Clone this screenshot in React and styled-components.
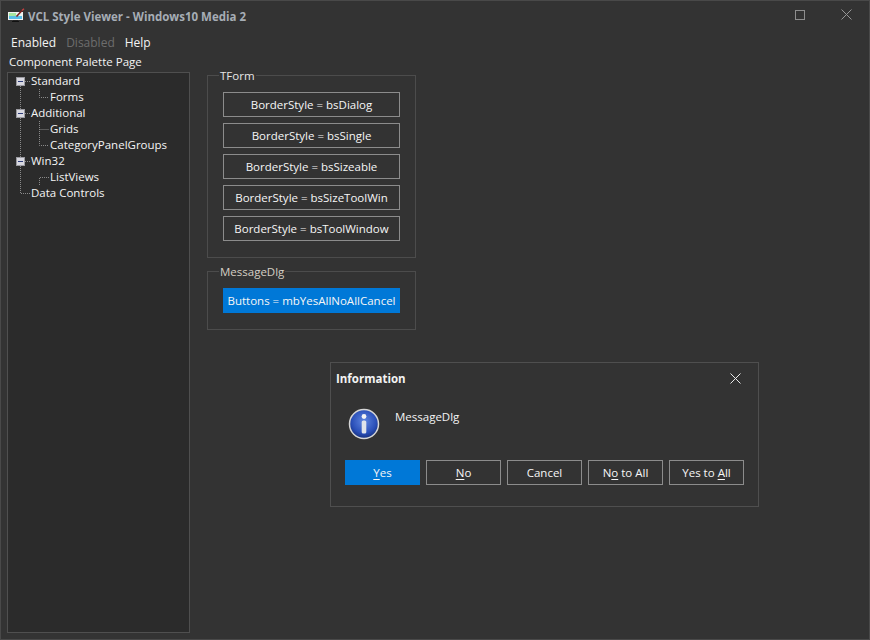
import React from 'react';
import styled, { createGlobalStyle } from 'styled-components';

const GlobalStyle = createGlobalStyle`
  html, body {
    margin: 0;
    padding: 0;
    background: #333333;
  }
  * {
    box-sizing: border-box;
  }
`;

const Window = styled.div`
  position: relative;
  width: 870px;
  height: 640px;
  display: flex;
  flex-direction: column;
  background: #333333;
  border: 1px solid #494949;
  color: #f4f4f4;
  font-family: "Open Sans", "Noto Sans", "Liberation Sans", sans-serif;
  font-size: 11.5px;
  overflow: hidden;
`;

const TitleBar = styled.div`
  height: 30px;
  display: flex;
  align-items: center;
  padding-left: 6px;
  flex-shrink: 0;
`;

const TitleText = styled.div`
  margin-left: 3px;
  font-weight: 700;
  font-size: 11.5px;
  color: #a6adb5;
  white-space: nowrap;
`;

const WindowButtons = styled.div`
  margin-left: auto;
  display: flex;
  margin-top: -3px;
`;

const WindowButton = styled.div`
  width: 46px;
  height: 22px;
  display: flex;
  align-items: center;
  justify-content: center;
`;

const MenuBar = styled.div`
  height: 22px;
  display: flex;
  padding-left: 10px;
  gap: 10px;
  align-items: center;
  flex-shrink: 0;
`;

const MenuItem = styled.span`
  font-size: 12px;
  color: ${p => (p.$disabled ? '#6d6d6d' : '#f4f4f4')};
`;

const Body = styled.div`
  flex: 1;
  display: flex;
  min-height: 0;
`;

const LeftColumn = styled.div`
  width: 190px;
  padding-left: 6px;
  display: flex;
  flex-direction: column;
  flex-shrink: 0;
`;

const PageLabel = styled.div`
  margin-left: 2px;
  height: 19px;
  line-height: 18px;
  white-space: nowrap;
`;

const Tree = styled.div`
  position: relative;
  width: 183px;
  height: 561px;
  background: #2b2b2b;
  border: 1px solid #4f4f4f;
  padding-top: 0;
`;

const TreeLines = styled.svg`
  position: absolute;
  left: 0;
  top: 0;
`;

const TreeRow = styled.div`
  position: relative;
  height: 16px;
  line-height: 16px;
  padding-left: ${p => (p.$depth ? 42 : 23)}px;
  white-space: nowrap;
`;

const Expander = styled.span`
  position: absolute;
  left: 8px;
  top: 4px;
  width: 9px;
  height: 9px;
  background: #d8d8e0;
  border: 1px solid #9a9aa0;
  &::after {
    content: '';
    position: absolute;
    left: 1px;
    top: 3px;
    width: 5px;
    height: 1px;
    background: #2c3a78;
  }
`;

const Content = styled.div`
  flex: 1;
  padding: 22px 0 0 16px;
  display: flex;
  flex-direction: column;
  gap: 13px;
`;

const Group = styled.div`
  position: relative;
  width: 209px;
  border: 1px solid #4c4c4c;
  padding: 16px 15px 16px 15px;
  display: flex;
  flex-direction: column;
  gap: 6px;
`;

const GroupTitle = styled.span`
  position: absolute;
  left: 11px;
  top: -8px;
  height: 15px;
  line-height: 15px;
  padding: 0 1px;
  background: #333333;
  color: ${p => (p.$muted ? '#d5cfc4' : '#e6e6e6')};
`;

const Button = styled.div`
  width: ${p => p.$width || 177}px;
  height: 25px;
  display: flex;
  align-items: center;
  justify-content: center;
  flex-shrink: 0;
  white-space: nowrap;
  background: ${p => (p.$primary ? '#0078d7' : 'transparent')};
  border: 1px solid ${p => (p.$primary ? '#0078d7' : '#8c8c8c')};
  color: #f6f6f6;
  u {
    text-underline-offset: 2px;
  }
`;

const Dialog = styled.div`
  position: absolute;
  left: 329px;
  top: 361px;
  width: 429px;
  height: 145px;
  background: #333333;
  border: 1px solid #4f4f4f;
  display: flex;
  flex-direction: column;
`;

const DialogHeader = styled.div`
  height: 31px;
  display: flex;
  align-items: center;
  justify-content: space-between;
  padding: 0 17px 0 5px;
  font-weight: 700;
  font-size: 11.5px;
  color: #f2f2f2;
`;

const DialogBody = styled.div`
  display: flex;
  padding: 14px 0 0 17px;
  height: 66px;
  gap: 15px;
`;

const DialogText = styled.div`
  margin-top: 1px;
  line-height: 16px;
`;

const DialogButtons = styled.div`
  display: flex;
  gap: 6px;
  padding-left: 14px;
`;

const AppIcon = () => (
  <svg width="18" height="16" viewBox="0 0 18 16">
    <rect x="1" y="4" width="15" height="8" fill="#f2f2f2" />
    <rect x="2" y="5" width="7" height="3" fill="#a8e6a0" />
    <rect x="9" y="5" width="6" height="3" fill="#e8f4f0" />
    <rect x="2" y="8" width="13" height="3" fill="#58bde8" />
    <rect x="6" y="12" width="5" height="1" fill="#222" />
    <rect x="5" y="13" width="7" height="1" fill="#111" />
    <path d="M9.5 8.5L15 2.5" stroke="#7a2020" strokeWidth="1.6" />
    <path d="M15 2.5L17 0.8" stroke="#c84040" strokeWidth="1.4" />
  </svg>
);

const InfoIcon = () => (
  <svg width="32" height="32" viewBox="0 0 32 32">
    <defs>
      <radialGradient id="infoFill" cx="50%" cy="40%" r="60%">
        <stop offset="0%" stopColor="#5f86e0" />
        <stop offset="70%" stopColor="#2a4fb8" />
        <stop offset="100%" stopColor="#16307e" />
      </radialGradient>
    </defs>
    <circle cx="16" cy="16" r="14.5" fill="url(#infoFill)" stroke="#d6d6d6" strokeWidth="1.5" />
    <circle cx="16" cy="8.5" r="2.4" fill="#f4f4f4" />
    <rect x="13.7" y="12.5" width="4.6" height="13" rx="1.6" fill="#dfe3ea" />
  </svg>
);

const TREE_ITEMS = [
  { label: 'Standard', expandable: true },
  { label: 'Forms', depth: 1 },
  { label: 'Additional', expandable: true },
  { label: 'Grids', depth: 1 },
  { label: 'CategoryPanelGroups', depth: 1 },
  { label: 'Win32', expandable: true },
  { label: 'ListViews', depth: 1 },
  { label: 'Data Controls' },
];

const FORM_BUTTONS = ['bsDialog', 'bsSingle', 'bsSizeable', 'bsSizeToolWin', 'bsToolWindow'];

const App = () => (
  <Window>
    <GlobalStyle />
    <TitleBar>
      <AppIcon />
      <TitleText>VCL Style Viewer - Windows10 Media 2</TitleText>
      <WindowButtons>
        <WindowButton />
        <WindowButton>
          <svg width="10" height="10" viewBox="0 0 10 10">
            <rect x="0.5" y="0.5" width="9" height="9" fill="none" stroke="#8e8e8e" />
          </svg>
        </WindowButton>
        <WindowButton>
          <svg width="11" height="11" viewBox="0 0 11 11">
            <path d="M0.5 0.5L10.5 10.5M10.5 0.5L0.5 10.5" stroke="#969696" />
          </svg>
        </WindowButton>
      </WindowButtons>
    </TitleBar>
    <MenuBar>
      <MenuItem>Enabled</MenuItem>
      <MenuItem $disabled>Disabled</MenuItem>
      <MenuItem>Help</MenuItem>
    </MenuBar>
    <Body>
      <LeftColumn>
        <PageLabel>Component Palette Page</PageLabel>
        <Tree>
          <TreeLines width="60" height="130">
            <path
              d="M12.5 13V120.5H22M17 8.5H22M31.5 16V24.5H41M31.5 48V72.5H41M31.5 112V104.5H41M17 40.5H22M17 88.5H22M31.5 56.5H41"
              fill="none"
              stroke="#8a8a8a"
              strokeDasharray="1 1"
            />
          </TreeLines>
          {TREE_ITEMS.map(item => (
            <TreeRow key={item.label} $depth={item.depth}>
              {item.expandable && <Expander />}
              {item.label}
            </TreeRow>
          ))}
        </Tree>
      </LeftColumn>
      <Content>
        <Group>
          <GroupTitle>TForm</GroupTitle>
          {FORM_BUTTONS.map(name => (
            <Button key={name}>BorderStyle = {name}</Button>
          ))}
        </Group>
        <Group>
          <GroupTitle $muted>MessageDlg</GroupTitle>
          <Button $primary>Buttons = mbYesAllNoAllCancel</Button>
        </Group>
      </Content>
    </Body>
    <Dialog>
      <DialogHeader>
        Information
        <svg width="11" height="11" viewBox="0 0 11 11">
          <path d="M0.5 0.5L10.5 10.5M10.5 0.5L0.5 10.5" stroke="#e8e8e8" />
        </svg>
      </DialogHeader>
      <DialogBody>
        <InfoIcon />
        <DialogText>MessageDlg</DialogText>
      </DialogBody>
      <DialogButtons>
        <Button $primary $width={75}><span><u>Y</u>es</span></Button>
        <Button $width={75}><span><u>N</u>o</span></Button>
        <Button $width={75}>Cancel</Button>
        <Button $width={75}><span>N<u>o</u> to All</span></Button>
        <Button $width={75}><span>Yes to <u>A</u>ll</span></Button>
      </DialogButtons>
    </Dialog>
  </Window>
);

export default App;
